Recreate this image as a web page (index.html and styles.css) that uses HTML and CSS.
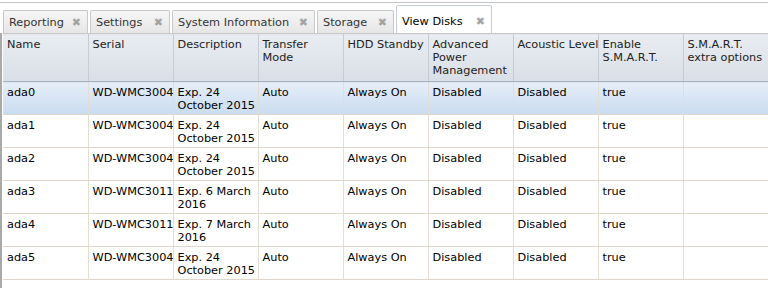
FILE: index.html
```html
<!DOCTYPE html>
<html lang="en">
<head>
  <meta charset="UTF-8" />
  <title>View Disks</title>
  <link rel="stylesheet" href="styles.css">
</head>
<body>
  <div class="topline"></div>
  <div class="tabbar">
    <div class="tab">Reporting <span class="close">&#x2716;</span></div>
    <div class="tab">Settings <span class="close">&#x2716;</span></div>
    <div class="tab">System Information <span class="close">&#x2716;</span></div>
    <div class="tab">Storage <span class="close">&#x2716;</span></div>
    <div class="tab active">View Disks <span class="close">&#x2716;</span></div>
  </div>
  <div class="panel">
    <table class="grid">
      <thead>
        <tr>
          <th>Name</th>
          <th>Serial</th>
          <th>Description</th>
          <th>Transfer Mode</th>
          <th>HDD Standby</th>
          <th>Advanced Power Management</th>
          <th class="nowrap">Acoustic Level</th>
          <th>Enable S.M.A.R.T.</th>
          <th>S.M.A.R.T. extra options</th>
        </tr>
      </thead>
      <tbody id="rows"></tbody>
    </table>
  </div>

  <script>
    const disks = [
      { name: 'ada0', serial: 'WD-WMC3004', desc: 'Exp. 24 October 2015' },
      { name: 'ada1', serial: 'WD-WMC3004', desc: 'Exp. 24 October 2015' },
      { name: 'ada2', serial: 'WD-WMC3004', desc: 'Exp. 24 October 2015' },
      { name: 'ada3', serial: 'WD-WMC3011', desc: 'Exp. 6 March 2016' },
      { name: 'ada4', serial: 'WD-WMC3011', desc: 'Exp. 7 March 2016' },
      { name: 'ada5', serial: 'WD-WMC3004', desc: 'Exp. 24 October 2015' }
    ];

    const tbody = document.getElementById('rows');
    disks.forEach((d, i) => {
      const tr = document.createElement('tr');
      if (i === 0) tr.className = 'selected';
      [d.name, d.serial, d.desc, 'Auto', 'Always On', 'Disabled', 'Disabled', 'true', ''].forEach(v => {
        const td = document.createElement('td');
        td.textContent = v;
        tr.appendChild(td);
      });
      tbody.appendChild(tr);
    });
  </script>
</body>
</html>
```

FILE: styles.css
```css
body {
  margin: 0;
  background: #fff;
  color: #000;
  font-family: "DejaVu Sans", Verdana, sans-serif;
  font-size: 11.3px;
  height: 288px;
  overflow: hidden;
}
.topline {
  height: 2px;
  border-bottom: 1px solid #c4c4c4;
}
.tabbar {
  display: flex;
  align-items: flex-end;
  gap: 2px;
  padding-left: 3px;
  height: 30px;
  box-sizing: border-box;
}
.tab {
  display: flex;
  align-items: center;
  justify-content: space-between;
  box-sizing: border-box;
  height: 23px;
  padding: 1px 6px 0 5px;
  border: 1px solid #c8c8c8;
  border-bottom: none;
  border-radius: 2px 2px 0 0;
  background: linear-gradient(#f6f6f6, #e6e6e6);
  color: #333;
  white-space: nowrap;
}
.tab:nth-child(1) { width: 85px; }
.tab:nth-child(2) { width: 80px; }
.tab:nth-child(3) { width: 143px; }
.tab:nth-child(4) { width: 77px; }
.tab:nth-child(5) { width: 96px; }
.tab.active {
  height: 28px;
  padding-top: 4px;
  background: #fff;
  border-color: #c4ccd6;
  color: #000;
}
.close {
  color: #a4a4a4;
  font-size: 11px;
  font-weight: bold;
}
.panel {
  border-left: 2px solid #a9a9a9;
  padding-left: 1px;
  height: 260px;
  box-sizing: border-box;
}
.grid {
  border-collapse: collapse;
  table-layout: fixed;
  width: 765px;
}
.grid th,
.grid td {
  width: 85px;
  box-sizing: border-box;
  text-align: left;
  vertical-align: top;
  line-height: 13px;
  overflow: hidden;
  white-space: normal;
}
.grid th {
  height: 48px;
  padding: 4px 1px 0 4px;
  font-weight: normal;
  color: #222;
  background: linear-gradient(#e9edf2, #d9dfe7);
  border-right: 1px solid #c6ccd3;
  border-bottom: 1px solid #aab2bc;
  border-top: 1px solid #c8c8c8;
}
.grid th.nowrap {
  white-space: nowrap;
  padding-right: 0;
}
.grid td {
  height: 33px;
  padding: 4px 1px 0 4px;
  border-right: 1px solid #e4ddd3;
  border-bottom: 1px solid #e0d6c9;
}
.grid td:nth-child(2) {
  white-space: nowrap;
}
.grid tr.selected td {
  background: linear-gradient(#e6eef8, #c9dcf0);
}
```
